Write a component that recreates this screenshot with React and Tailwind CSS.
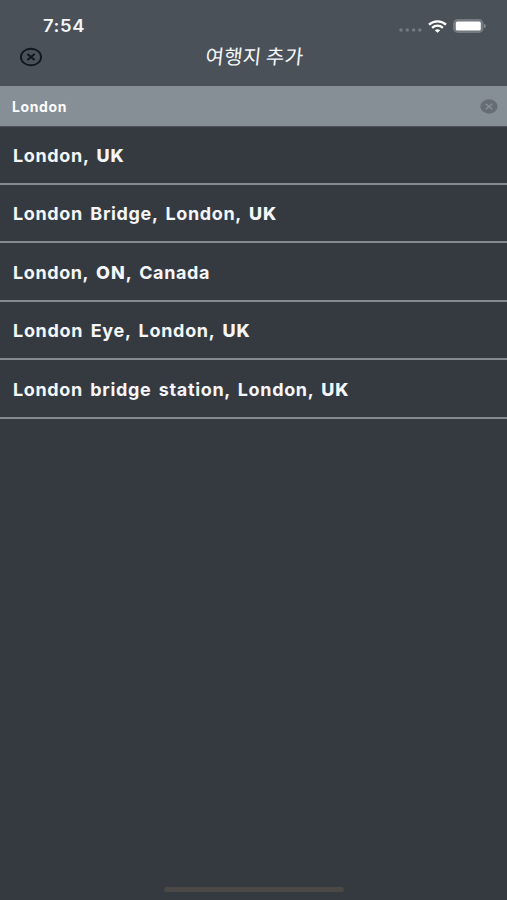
const PLACES = [
  { name: "London, UK", spacing: "tracking-[0.65px]" },
  { name: "London Bridge, London, UK", spacing: "tracking-[0.65px]" },
  { name: "London, ON, Canada", spacing: "tracking-[0.6px]" },
  { name: "London Eye, London, UK", spacing: "tracking-[0.7px]" },
  { name: "London bridge station, London, UK", spacing: "tracking-[0.65px]" },
];

function StatusBar() {
  return (
    <div className="flex h-[42px] items-start justify-between pl-[43px] pr-[21px] pt-[17px]">
      <span className="origin-left scale-x-[1.08] text-[17px] leading-[19px] font-semibold tracking-[0.6px] text-[#f4f6fa]">7:54</span>
      <div className="flex items-center pt-[2px]">
        <svg className="mt-[7px] mr-[6px] h-[4px] w-[23px]" viewBox="0 0 23 4" fill="#747a80">
          <circle cx="2" cy="2" r="1.8" />
          <circle cx="8.3" cy="2" r="1.8" />
          <circle cx="14.6" cy="2" r="1.8" />
          <circle cx="20.9" cy="2" r="1.8" />
        </svg>
        <svg className="mr-[6px] h-[13px] w-[19px]" viewBox="0 0 19 13" fill="none" stroke="#fff" strokeWidth="2.3">
          <path d="M1 4.7C5.8.2 13.2.2 18 4.7" />
          <path d="M4.1 7.8c3.1-2.9 7.7-2.9 10.8 0" />
          <path d="M6.8 10.2c1.7-1.3 3.7-1.3 5.4 0L9.5 12.7z" fill="#fff" stroke="none" />
        </svg>
        <svg className="h-[14px] w-[33px]" viewBox="0 0 33 14">
          <rect x="0.9" y="0.9" width="28.8" height="12.2" rx="3.6" fill="#6f757b" stroke="#757b81" strokeWidth="1.6" />
          <rect x="2.8" y="2.5" width="25" height="9" rx="1.6" fill="#fff" />
          <path d="M31 4.7q1.9.7 1.9 2.3t-1.9 2.3z" fill="#858b90" />
        </svg>
      </div>
    </div>
  );
}

function Header() {
  return (
    <div className="flex h-[44px] items-start pl-[19px]">
      <button aria-label="닫기" className="mt-[5px] w-[24px]">
        <svg className="h-[20px] w-[24px]" viewBox="0 0 24 20" fill="none" stroke="#12171c">
          <ellipse cx="12" cy="10" rx="10.1" ry="8.3" strokeWidth="1.9" />
          <path d="M8.4 7l7.2 6M15.6 7l-7.2 6" strokeWidth="2.1" />
        </svg>
      </button>
      <h1 className="flex-1 -skew-x-6 pr-[41px] text-center text-[20px] leading-[28px] font-normal tracking-[0.2px] text-[#f4f6fa] font-['Noto_Sans_CJK_KR',sans-serif]">여행지 추가</h1>
    </div>
  );
}

function SearchField() {
  return (
    <div className="flex h-[41px] items-center justify-between border-b border-[#4b5259] bg-[#868e96] pl-[12px] pr-[9px]">
      <div className="flex items-center pt-px">
        <span className="text-[14px] leading-[20px] font-bold tracking-[0.6px] text-[#fbfcfd]">London</span>
        <span className="h-[15px] w-px bg-[#7192cf]" />
      </div>
      <svg className="mt-px h-[15px] w-[18px]" viewBox="0 0 18 15">
        <ellipse cx="9" cy="7.5" rx="8.6" ry="7.2" fill="#666d74" />
        <path d="M5.7 4.8l6.6 5.4M12.3 4.8l-6.6 5.4" stroke="#8b9299" strokeWidth="1.4" />
      </svg>
    </div>
  );
}

// country and state codes are drawn heavier than the rest of the name
function PlaceName({ name }) {
  return name.split(/(UK|ON)/).map((part, i) =>
    i % 2 ? <span key={i} className="font-extrabold tracking-[1px]">{part}</span> : part
  );
}

export default function App() {
  return (
    <div className="flex h-[900px] w-[507px] flex-col overflow-hidden bg-[#353a41] font-['Inter',sans-serif]">
      <div className="bg-[#4a5158]">
        <StatusBar />
        <Header />
      </div>
      <SearchField />
      <ul className="-mt-px flex-1">
        {PLACES.map((place) => (
          <li key={place.name} className="flex h-[58.5px] items-center border-b-2 border-[#858a8f] pt-[3px] pl-[13px]">
            <span className={`text-[18px] leading-[24px] font-bold whitespace-nowrap text-[#f4f6f9] [word-spacing:2.5px] ${place.spacing}`}>
              <PlaceName name={place.name} />
            </span>
          </li>
        ))}
      </ul>
      {/* home indicator */}
      <div className="mb-[8px] ml-[164px] h-[5px] w-[180px] rounded-full bg-[#4b4846]" />
    </div>
  );
}
